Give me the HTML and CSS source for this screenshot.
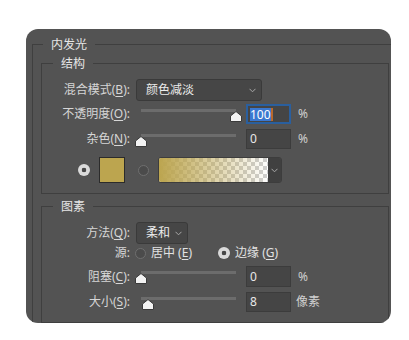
FILE: index.html
```html
<!DOCTYPE html>
<html>
<head>
    <title>内发光</title>
    <link rel="stylesheet" href="styles.css">
</head>
<body>
    <div class="panel">
        <fieldset class="group outer">
            <legend>内发光</legend>

            <fieldset class="group">
                <legend>结构</legend>
                <div class="row row-tall">
                    <span class="caption">混合模式(<u>B</u>):</span>
                    <div class="select select-blend">
                        <span>颜色减淡</span>
                        <svg class="chevron" width="7" height="5" viewBox="0 0 7 5"><polyline points="0.5,0.8 3.5,3.8 6.5,0.8"/></svg>
                    </div>
                </div>
                <div class="row row-opacity">
                    <span class="caption">不透明度(<u>O</u>):</span>
                    <div class="slider">
                        <div class="rail">
                            <svg class="thumb" style="left: 100%" width="12" height="11" viewBox="0 0 12 11"><polygon points="6,0.5 11.5,5 11.5,10.5 0.5,10.5 0.5,5"/></svg>
                        </div>
                    </div>
                    <div class="field focused"><span class="picked">100</span><span class="caret"></span></div>
                    <span class="unit">%</span>
                </div>
                <div class="row row-noise">
                    <span class="caption">杂色(<u>N</u>):</span>
                    <div class="slider">
                        <div class="rail">
                            <svg class="thumb" style="left: 0%" width="12" height="11" viewBox="0 0 12 11"><polygon points="6,0.5 11.5,5 11.5,10.5 0.5,10.5 0.5,5"/></svg>
                        </div>
                    </div>
                    <div class="field">0</div>
                    <span class="unit">%</span>
                </div>
                <div class="row row-colors">
                    <span class="radio on"></span>
                    <span class="swatch"></span>
                    <span class="radio"></span>
                    <div class="gradient">
                        <span class="ramp"></span>
                        <span class="ramp-menu">
                            <svg class="chevron" width="7" height="5" viewBox="0 0 7 5"><polyline points="0.5,0.8 3.5,3.8 6.5,0.8"/></svg>
                        </span>
                    </div>
                </div>
            </fieldset>

            <fieldset class="group elements">
                <legend>图素</legend>
                <div class="row row-tall">
                    <span class="caption">方法(<u>Q</u>):</span>
                    <div class="select select-method">
                        <span>柔和</span>
                        <svg class="chevron" width="7" height="5" viewBox="0 0 7 5"><polyline points="0.5,0.8 3.5,3.8 6.5,0.8"/></svg>
                    </div>
                </div>
                <div class="row row-source">
                    <span class="caption">源:</span>
                    <span class="radio"></span>
                    <span class="choice">居中 (<u>E</u>)</span>
                    <span class="radio on second"></span>
                    <span class="choice">边缘 (<u>G</u>)</span>
                </div>
                <div class="row row-choke">
                    <span class="caption">阻塞(<u>C</u>):</span>
                    <div class="slider">
                        <div class="rail">
                            <svg class="thumb" style="left: 0%" width="12" height="11" viewBox="0 0 12 11"><polygon points="6,0.5 11.5,5 11.5,10.5 0.5,10.5 0.5,5"/></svg>
                        </div>
                    </div>
                    <div class="field">0</div>
                    <span class="unit">%</span>
                </div>
                <div class="row row-size">
                    <span class="caption">大小(<u>S</u>):</span>
                    <div class="slider">
                        <div class="rail">
                            <svg class="thumb" style="left: 7%" width="12" height="11" viewBox="0 0 12 11"><polygon points="6,0.5 11.5,5 11.5,10.5 0.5,10.5 0.5,5"/></svg>
                        </div>
                    </div>
                    <div class="field">8</div>
                    <span class="unit unit-px">像素</span>
                </div>
            </fieldset>
        </fieldset>
    </div>
</body>
</html>
```

FILE: styles.css
```css
body {
    margin: 0;
    background-color: #ffffff;
    font-family: "Noto Sans", "Noto Sans CJK SC", sans-serif;
    font-size: 12px;
}

.panel {
    margin: 29px 0 0 26px;
    width: 365px;
    height: 294px;
    background-color: #535353;
    border-radius: 12px;
    overflow: hidden;
    color: #d6d6d6;
}

u {
    text-decoration-thickness: 1px;
    text-underline-offset: 2px;
}

/* group boxes */

.group {
    box-sizing: border-box;
    margin: 0;
    min-width: 0;
    width: 348px;
    padding: 8px 0 10px 0;
    border: 1px solid #3f3f3f;
}

.group legend {
    height: 15px;
    line-height: 15px;
    padding: 0 8px;
    margin-left: 11px;
    color: #e6e6e6;
}

.group.outer {
    width: 364px;
    margin: 8px 0 0 6px;
    padding: 4px 6px 0 8px;
}

.group.outer > legend {
    margin-left: 2px;
}

.group.elements {
    margin-top: 5px;
}

/* rows */

.row {
    display: flex;
    align-items: center;
    height: 20px;
    line-height: 16px;
}

.row-tall {
    height: 22px;
}

.row-opacity {
    margin-top: 3px;
}

.row-noise {
    margin-top: 5px;
}

.row-colors {
    height: 26px;
    margin-top: 8px;
    padding-left: 36px;
}

.row-source {
    height: 18px;
}

.row-choke {
    height: 21px;
    margin-top: 4px;
}

.row-size {
    margin-top: 5px;
}

.caption {
    flex: none;
    width: 88px;
    margin-right: 6px;
    text-align: right;
    white-space: nowrap;
}

/* dropdowns */

.select {
    box-sizing: border-box;
    height: 22px;
    display: flex;
    align-items: center;
    justify-content: space-between;
    padding: 0 5px 0 9px;
    background-color: #464646;
    border: 1px solid #3a3a3a;
    border-radius: 3px;
    color: #ececec;
}

.select-blend {
    width: 126px;
}

.select-method {
    width: 52px;
}

.chevron {
    fill: none;
    stroke: #a8a8a8;
    stroke-width: 1;
}

/* sliders */

.slider {
    flex: none;
    width: 110px;
    height: 100%;
}

.rail {
    position: relative;
    margin: 5px 0 0 5px;
    width: 95px;
    height: 3px;
    background-color: #6c6c6c;
}

.thumb {
    position: absolute;
    top: 2px;
    transform: translateX(-50%);
    fill: #f2f2f2;
    stroke: #3a3a3a;
    stroke-width: 1;
}

/* number fields */

.field {
    box-sizing: border-box;
    width: 45px;
    height: 100%;
    display: flex;
    align-items: center;
    padding-left: 3px;
    background-color: #454545;
    border: 1px solid #3c3c3c;
    color: #e8e8e8;
}

.field.focused {
    border: 2px solid #2a5f9e;
    padding-left: 2px;
}

.picked {
    background-color: #3b78d0;
    color: #ffffff;
    line-height: 13px;
}

.caret {
    width: 2px;
    height: 13px;
    background-color: #b8692c;
}

.unit {
    margin-left: 7px;
    color: #d0d0d0;
}

.unit-px {
    margin-left: 5px;
}

/* colour row */

.radio {
    flex: none;
    box-sizing: border-box;
    width: 11px;
    height: 11px;
    border-radius: 50%;
    border: 1px solid #6f6f6f;
    background-color: #4b4b4b;
}

.radio.on {
    width: 12px;
    height: 12px;
    border: none;
    background: radial-gradient(circle, #474747 0 2px, #dadada 2.6px);
}

.swatch {
    box-sizing: border-box;
    width: 26px;
    height: 26px;
    margin: 0 13px 0 9px;
    background-color: #bca54f;
    border: 1px solid #2b2b2b;
}

.gradient {
    box-sizing: border-box;
    display: flex;
    width: 124px;
    height: 26px;
    margin-left: 9px;
    border: 1px solid #3d3d3d;
    border-radius: 3px;
    overflow: hidden;
}

.ramp {
    flex: 1;
    background:
        linear-gradient(to right, #bca54f, rgba(188, 165, 79, 0.55) 45%, rgba(255, 255, 255, 0)),
        conic-gradient(#ffffff 25%, #cfcfcf 0 50%, #ffffff 0 75%, #cfcfcf 0) 0 0 / 8px 8px;
}

.ramp-menu {
    width: 13px;
    display: flex;
    align-items: center;
    justify-content: center;
    background-color: #404040;
}

/* source row */

.row-source .radio {
    margin-left: -1px;
}

.choice {
    margin-left: 5px;
    color: #e2e2e2;
}

.radio.second {
    margin-left: 26px;
}
```
